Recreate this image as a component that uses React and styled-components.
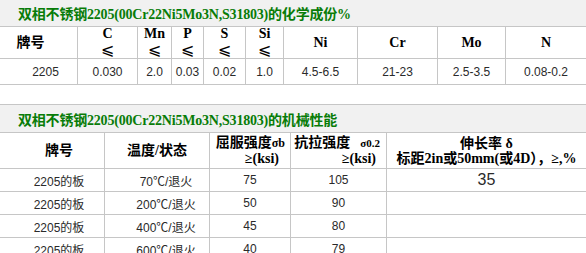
import React from "react";
import styled, { createGlobalStyle } from "styled-components";

const GlobalStyle = createGlobalStyle`
  html, body {
    margin: 0;
    padding: 0;
    background: #ffffff;
  }
`;

const Page = styled.div`
  width: 586px;
  display: flex;
  flex-direction: column;
  gap: 19px;
`;

const Table = styled.div`
  display: grid;
  grid-template-columns: ${(p) => p.$cols};
`;

const TitleBar = styled.div`
  grid-column: 1 / -1;
  height: ${(p) => p.$h}px;
  background: #f1f1f1;
  border-top: ${(p) => (p.$top ? "1px solid #c6c6c6" : "none")};
  border-bottom: 1px solid #c6c6c6;
  display: flex;
  align-items: center;
  padding-left: 18px;
  color: #087c08;
  font-family: "Liberation Serif", "Noto Sans CJK SC", serif;
  font-weight: bold;
  font-size: 14px;
  letter-spacing: -0.2px;
`;

const Cell = styled.div`
  height: ${(p) => p.$h}px;
  box-sizing: border-box;
  border-bottom: 1px solid #c6c6c6;
  border-right: ${(p) => (p.$last ? "none" : "1px solid #c6c6c6")};
  display: flex;
  flex-direction: column;
  justify-content: center;
  align-items: ${(p) => p.$align || "center"};
  padding: 0 ${(p) => p.$pr || 0}px 0 ${(p) => p.$pl || 0}px;
`;

const Head = styled(Cell)`
  color: #000;
  font-family: "Liberation Serif", "Noto Sans CJK SC", serif;
  font-weight: bold;
  font-size: 14px;
  line-height: 15px;
`;

const Data = styled(Cell)`
  color: #2a2a2a;
  font-family: "Liberation Sans", "Noto Sans CJK SC", sans-serif;
  font-size: ${(p) => p.$size || 12}px;
  font-weight: ${(p) => (p.$size ? 300 : 400)};
`;

const Line = styled.span`
  display: block;
  white-space: nowrap;
  line-height: ${(p) => p.$lh || 15}px;
  padding-right: ${(p) => p.$pr || 0}px;
  padding-left: ${(p) => p.$pl || 0}px;
`;

const Le = styled.span`
  display: block;
  height: 17px;
  line-height: 17px;
  font-family: "DejaVu Sans", sans-serif;
  font-weight: normal;
  font-size: 16px;
`;

const Sigma = styled.span`
  font-size: ${(p) => p.$size}px;
  margin-left: ${(p) => p.$ml || 0}px;
`;

const elements = ["C", "Mn", "P", "S", "Si"];
const plain = ["Ni", "Cr", "Mo", "N"];
const chemValues = ["0.030", "2.0", "0.03", "0.02", "1.0", "4.5-6.5", "21-23", "2.5-3.5", "0.08-0.2"];

const mechRows = [
  { temp: "70℃/退火", ys: "75", ts: "105", el: "35" },
  { temp: "200℃/退火", ys: "50", ts: "90", el: "" },
  { temp: "400℃/退火", ys: "45", ts: "80", el: "" },
  { temp: "600℃/退火", ys: "40", ts: "79", el: "" },
];

export default function App() {
  return (
    <>
      <GlobalStyle />
      <Page>
        <Table $cols="78px 60px 34px 32px 42px 38px 74px 80px 68px 80px">
          <TitleBar $h={26}>双相不锈钢2205(00Cr22Ni5Mo3N,S31803)的化学成份%</TitleBar>
          <Head $h={32} $pr={16}>牌号</Head>
          {elements.map((el) => (
            <Head key={el} $h={32}>
              <Line $lh={14}>{el}</Line>
              <Le>⩽</Le>
            </Head>
          ))}
          {plain.map((el, i) => (
            <Head key={el} $h={32} $last={i === plain.length - 1}>
              {el}
            </Head>
          ))}
          <Data $h={26} $pl={14}>2205</Data>
          {chemValues.map((v, i) => (
            <Data key={i} $h={26} $last={i === chemValues.length - 1}>
              {v}
            </Data>
          ))}
        </Table>

        <Table $cols="105px 105px 81px 96px 199px">
          <TitleBar $h={27} $top>双相不锈钢2205(00Cr22Ni5Mo3N,S31803)的机械性能</TitleBar>
          <Head $h={36} $pl={14}>牌号</Head>
          <Head $h={36}>温度/状态</Head>
          <Head $h={36} $align="flex-end" $pr={5}>
            <Line>
              屈服强度<Sigma $size={12}>σb</Sigma>
            </Line>
            <Line $pr={6}>≥(ksi)</Line>
          </Head>
          <Head $h={36} $align="flex-end" $pr={6}>
            <Line>
              抗拉强度<Sigma $size={11} $ml={10}>σ0.2</Sigma>
            </Line>
            <Line $pr={4}>≥(ksi)</Line>
          </Head>
          <Head $h={36} $last>
            <Line>伸长率 δ</Line>
            <Line>标距2in或50mm(或4D），≥,%</Line>
          </Head>
          {mechRows.map((r, i) => (
            <React.Fragment key={i}>
              <Data $h={23} $pl={14}>2205的板</Data>
              <Data $h={23} $pl={18}>{r.temp}</Data>
              <Data $h={23}>{r.ys}</Data>
              <Data $h={23}>{r.ts}</Data>
              <Data $h={23} $last $size={r.el ? 16 : 0}>
                {r.el}
              </Data>
            </React.Fragment>
          ))}
        </Table>
      </Page>
    </>
  );
}
